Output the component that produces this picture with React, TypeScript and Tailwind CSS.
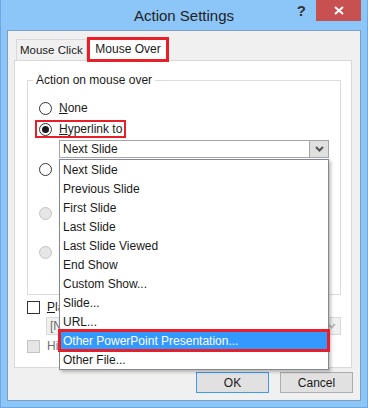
import React from 'react';

const items = [
  'Next Slide',
  'Previous Slide',
  'First Slide',
  'Last Slide',
  'Last Slide Viewed',
  'End Show',
  'Custom Show...',
  'Slide...',
  'URL...',
  'Other PowerPoint Presentation...',
  'Other File...',
];

const Radio: React.FC<{ checked?: boolean; disabled?: boolean }> = ({ checked, disabled }) => (
  <span
    className={`flex h-[13px] w-[13px] shrink-0 items-center justify-center rounded-full border ${
      disabled ? 'border-[#c4c4c4] bg-[#e6e6e6]' : 'border-[#333333] bg-white'
    }`}
  >
    {checked && <span className="h-[7px] w-[7px] rounded-full bg-[#1a1a1a]" />}
  </span>
);

const Check: React.FC<{ disabled?: boolean }> = ({ disabled }) => (
  <span
    className={`block h-[13px] w-[13px] shrink-0 border ${
      disabled ? 'border-[#c4c4c4] bg-[#e6e6e6]' : 'border-[#333333] bg-white'
    }`}
  />
);

const Chevron: React.FC<{ color: string }> = ({ color }) => (
  <svg width="9" height="6" viewBox="0 0 9 6">
    <path d="M1 1 L4.5 4.5 L8 1" fill="none" stroke={color} strokeWidth="2" />
  </svg>
);

const App: React.FC = () => {
  return (
    <div className="h-[408px] w-[368px] border-x border-b border-[#6ea8de] bg-[#8cc5f7] font-['Liberation_Sans',Arial,sans-serif] text-[12px] text-[#1a1a1a]">
      {/* title bar */}
      <div className="grid h-[30px] grid-cols-[1fr_auto_1fr]">
        <div />
        <div className="flex items-center pt-[2px] text-[15px] text-[#222222]">Action Settings</div>
        <div className="flex justify-end">
          <span className="mr-[10px] mt-[3px] text-[15px] font-bold leading-[15px] text-[#333333]">?</span>
          <div className="mr-[6px] flex h-[21px] w-[45px] items-center justify-center bg-[#c75050]">
            <svg width="10" height="9" viewBox="0 0 10 9">
              <path d="M1 1 L9 8 M9 1 L1 8" stroke="white" strokeWidth="2" />
            </svg>
          </div>
        </div>
      </div>

      {/* client area */}
      <div className="mx-[6px] h-[371px] border border-[#7f9fc0] bg-[#f0f0f0]">
        {/* tabs */}
        <div className="flex items-end pl-[8px] pt-[6px]">
          <div className="flex h-[21px] w-[71px] items-center overflow-hidden whitespace-nowrap border-x border-t border-[#d9d9d9] bg-[#f0f0f0] pl-[3px] pt-[2px] text-[11.5px]">
            Mouse Click
          </div>
          <div className="relative z-10 -mb-[2px] flex h-[25px] w-[82px] items-center justify-center whitespace-nowrap border-[3px] border-[#e81e28] bg-white pb-[1px]">
            Mouse Over
          </div>
        </div>

        {/* panel */}
        <div className="ml-[6px] h-[308px] w-[338px] border border-[#d9d9d9] bg-white">
          <fieldset className="ml-[12px] mt-[11px] w-[314px] border border-[#dcdcdc] pb-[13px] pl-[11px]">
            <legend className="ml-[-6px] px-[3px] leading-[16px]">Action on mouse over</legend>

            <div className="mt-[10px] flex h-[20px] items-center gap-[7px]">
              <Radio />
              <span>
                <u>N</u>one
              </span>
            </div>

            <div className="mt-[1px] flex h-[20px] items-center">
              <div className="-ml-[2px] flex h-[14px] items-center gap-[7px] px-[2px] outline-2 outline-solid outline-[#e81e28]">
                <Radio checked />
                <span>
                  <u>H</u>yperlink to
                </span>
              </div>
            </div>

            <div className="relative z-20 ml-[20px] mt-[1px] flex h-[18px] w-[270px] items-center border border-[#a5a5a5] bg-white">
              <span className="flex-1 pl-[3px]">Next Slide</span>
              <span className="flex h-full w-[19px] items-center justify-center border-l border-[#a5a5a5] bg-[#e0e0e0]">
                <Chevron color="#555555" />
              </span>

              <div className="absolute left-[-1px] top-[18px] w-[270px] border border-[#828790] bg-white shadow-[2px_2px_3px_rgba(0,0,0,0.25)]">
                {items.map((label, i) =>
                  i === 9 ? (
                    <div
                      key={label}
                      className="relative z-10 flex h-[19px] items-center bg-[#3399ff] pl-[3px] text-white outline-[3px] outline-solid outline-[#e81e28] outline-offset-[-1px]"
                    >
                      {label}
                    </div>
                  ) : (
                    <div key={label} className="flex h-[19px] items-center pl-[3px]">
                      {label}
                    </div>
                  ),
                )}
              </div>
            </div>

            {/* rows covered by the open list */}
            <div className="mt-[1px] flex h-[20px] items-center">
              <Radio />
            </div>
            <div className="ml-[20px] mt-[1px] h-[18px] w-[250px] border border-[#d9d9d9] bg-[#f0f0f0]" />

            <div className="mt-[5px] flex h-[20px] items-center">
              <Radio disabled />
            </div>
            <div className="ml-[20px] mt-[1px] h-[18px] w-[250px] border border-[#d9d9d9] bg-[#f0f0f0]" />

            <div className="flex h-[20px] items-center">
              <Radio disabled />
            </div>
            <div className="ml-[20px] mt-[1px] h-[18px] w-[250px] border border-[#d9d9d9] bg-[#f0f0f0]" />
          </fieldset>

          <div className="ml-[12px] mt-[2px] flex h-[20px] items-center gap-[7px]">
            <Check />
            <span className="w-[12px] overflow-hidden whitespace-nowrap">
              <u>P</u>la
            </span>
          </div>
          <div className="ml-[31px] flex h-[18px] w-[295px] items-center border border-[#d9d9d9] bg-[#f0f0f0] text-[#6d6d6d]">
            <span className="w-[12px] overflow-hidden whitespace-nowrap pl-[3px]">[N</span>
            <span className="flex-1" />
            <span className="flex h-full w-[18px] items-center justify-center">
              <Chevron color="#bdbdbd" />
            </span>
          </div>
          <div className="ml-[12px] mt-[1px] flex h-[20px] items-center gap-[7px]">
            <Check disabled />
            <span className="w-[12px] overflow-hidden whitespace-nowrap text-[#6d6d6d]">Hi</span>
          </div>
        </div>

        {/* buttons */}
        <div className="mt-[4px] flex justify-end gap-[11px] pr-[7px]">
          <button className="flex h-[21px] w-[73px] items-center justify-center border border-[#3c9bf0] bg-[#e1e1e1]">
            OK
          </button>
          <button className="flex h-[21px] w-[73px] items-center justify-center border border-[#adadad] bg-[#e1e1e1]">
            Cancel
          </button>
        </div>
      </div>
    </div>
  );
};

export default App;
